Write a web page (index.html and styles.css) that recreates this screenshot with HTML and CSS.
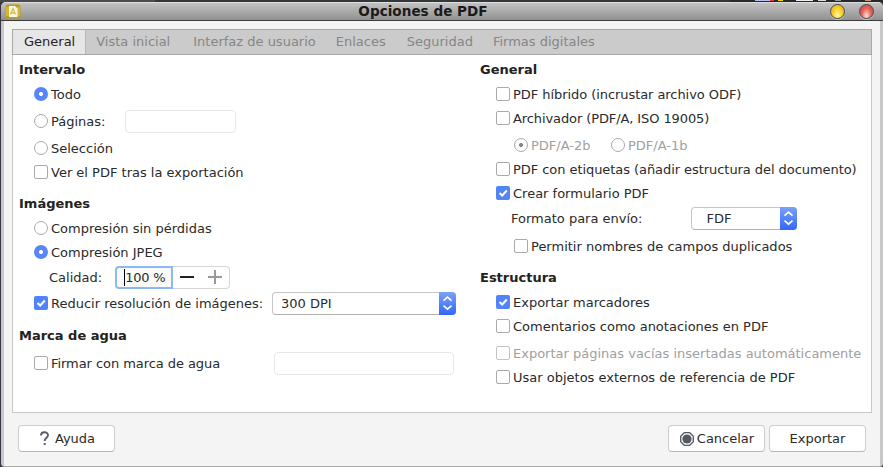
FILE: index.html
```html
<!DOCTYPE html>
<html lang="es">
<head>
<meta charset="utf-8">
<title>Opciones de PDF</title>
<link rel="stylesheet" href="styles.css">
</head>
<body>
<div class="desktop"><i class="d1"></i><i class="d2"></i><i class="d3"></i><i class="d4"></i><i class="d5"></i><i class="d6"></i><i class="d7"></i></div>
<div class="window">
  <header class="titlebar">
    <svg class="app-icon" width="16" height="16" viewBox="0 0 16 16"><rect x="0.5" y="0.5" width="15" height="14" rx="2.500" fill="#c39b13"/><path d="M1 3h3v9H1zM12 3h3v9h-3z" fill="#d8b52d"/><path d="M4 2h6l2.500 2.500V13H4z" fill="#fbf9ee"/><path d="M5.500 10.500L8 4.500l2.500 6M6.500 9h3" fill="none" stroke="#ddb945" stroke-width="1.300"/></svg>
    <h1>Opciones de PDF</h1>
    <span class="orb yellow"></span><span class="orb red"></span>
  </header>
  <main class="body">
    <nav class="tabs"><span class="tab active">General</span><span class="tab t2">Vista inicial</span><span class="tab t3">Interfaz de usuario</span><span class="tab t4">Enlaces</span><span class="tab t5">Seguridad</span><span class="tab t6">Firmas digitales</span></nav>
    <section class="panel">
      <div class="col left">
        <h2>Intervalo</h2>
        <label class="row"><i class="radio on"></i>Todo</label>
        <label class="row g3"><i class="radio"></i>Páginas:<span class="field pages"></span></label>
        <label class="row g3"><i class="radio"></i>Selección</label>
        <label class="row"><i class="check"></i>Ver el PDF tras la exportación</label>
        <h2 class="g8">Imágenes</h2>
        <label class="row"><i class="radio"></i>Compresión sin pérdidas</label>
        <label class="row"><i class="radio on"></i>Compresión JPEG</label>
        <div class="row g1 quality">Calidad:<span class="spin"><span class="value"><i class="caret"></i>100 %</span><span class="steps"><svg width="57" height="22" viewBox="0 0 57 22"><path d="M7 10h14" stroke="#222" stroke-width="2"/><path d="M35 10h14M42 3v14" stroke="#999" stroke-width="2"/></svg></span></span></div>
        <div class="row g2"><i class="check on"><svg width="14" height="14" viewBox="0 0 14 14"><path d="M3.500 7l2.700 2.500L10.800 4.500"/></svg></i>Reducir resolución de imágenes:<span class="select dpi">300 DPI<span class="arrows"><svg width="17" height="23" viewBox="0 0 17 23"><path d="M4.500 8.700l4-3.500 4 3.500M4.500 13.700l4 3.500 4-3.500"/></svg></span></span></div>
        <h2 class="g9">Marca de agua</h2>
        <label class="row g3 tight"><i class="check"></i>Firmar con marca de agua<span class="field mark"></span></label>
      </div>
      <div class="col right">
        <h2>General</h2>
        <label class="row tight"><i class="check"></i>PDF híbrido (incrustar archivo ODF)</label>
        <label class="row tighter"><i class="check"></i>Archivador (PDF/A, ISO 19005)</label>
        <div class="row g3 sub disabled"><i class="radio dot"></i><span class="pdfa">PDF/A-2b</span><i class="radio"></i>PDF/A-1b</div>
        <label class="row tight"><i class="check"></i>PDF con etiquetas (añadir estructura del documento)</label>
        <label class="row"><i class="check on"><svg width="14" height="14" viewBox="0 0 14 14"><path d="M3.500 7l2.700 2.500L10.800 4.500"/></svg></i>Crear formulario PDF</label>
        <div class="row g1 format">Formato para envío:<span class="select fdf">FDF<span class="arrows"><svg width="17" height="23" viewBox="0 0 17 23"><path d="M4.500 8.700l4-3.500 4 3.500M4.500 13.700l4 3.500 4-3.500"/></svg></span></span></div>
        <label class="row g4 sub"><i class="check"></i>Permitir nombres de campos duplicados</label>
        <h2 class="g8">Estructura</h2>
        <label class="row"><i class="check on"><svg width="14" height="14" viewBox="0 0 14 14"><path d="M3.500 7l2.700 2.500L10.800 4.500"/></svg></i>Exportar marcadores</label>
        <label class="row"><i class="check"></i>Comentarios como anotaciones en PDF</label>
        <label class="row g3 disabled"><i class="check"></i>Exportar páginas vacías insertadas automáticamente</label>
        <label class="row"><i class="check"></i>Usar objetos externos de referencia de PDF</label>
      </div>
    </section>
    <footer class="actions">
      <button class="help"><svg width="9" height="15" viewBox="0 0 9 15"><path d="M1 4.500C1 .3 8 .3 8 4.200 8 6.700 4.700 6.800 4.700 10" fill="none" stroke="#5b5d68" stroke-width="1.900"/><path d="M3.700 12h2v2h-2z" fill="#5b5d68"/></svg>Ayuda</button>
      <button class="cancel"><svg width="14" height="14" viewBox="0 0 14 14"><path d="M4.300.7h5.400l3.600 3.600v5.400l-3.600 3.600H4.300L.7 9.700V4.300z" fill="#fff" stroke="#555762" stroke-width="1.300"/><circle cx="7" cy="7" r="4.600" fill="#555762"/></svg>Cancelar</button>
      <button class="export">Exportar</button>
    </footer>
  </main>
</div>
</body>
</html>
```
FILE: styles.css
```css
* { box-sizing: border-box; }
body { margin: 0; width: 883px; height: 467px; overflow: hidden; background: #3a3540; font: 13px/24px "DejaVu Sans", sans-serif; color: #2a2a2a; white-space: nowrap; }
.desktop { height: 2px; background: linear-gradient(90deg, #4a4b50 0 155px, #34373a 155px 730px, #28282c 730px); display: flex; padding-left: 755px; }
.desktop i { height: 1px; }
.d1 { width: 15px; background: #b6c0f5; }
.d2 { width: 4px; background: #e03838; }
.d3 { width: 5px; margin-left: 4px; background: #f3e300; }
.d4 { width: 17px; margin-left: 13px; background: #eee; }
.d5 { width: 8px; margin-left: 5px; background: #ddd; }
.d6 { width: 6px; margin-left: 9px; background: #999; }
.d7 { width: 6px; margin-left: 24px; background: #c99c7c; }
.window { height: 465px; margin-left: 1px; background: #c9c7c7; border-radius: 5px 5px 4px 4px; overflow: hidden; }
.titlebar { height: 19px; display: flex; align-items: center; background: linear-gradient(#dedede 0 1px, #c2c2c2 1px, #919191); border-bottom: 1px solid #3c3c3c; padding: 0 9px 0 4px; }
.app-icon { margin-top: 2px; }
h1 { flex: 1; margin: 0 -1px 0 8px; font-size: 13.6px; line-height: 18px; text-align: center; color: #1b1b1b; }
.orb { width: 15px; height: 15px; border-radius: 50%; border: 1px solid #4d4d4d; margin: 1px 0 0 14px; box-shadow: 0 1px #ccc; }
.yellow { background: radial-gradient(ellipse at 50% 80%, #fff9a0, #f5cf2c 50%, #d9a51c); }
.red { background: radial-gradient(ellipse at 50% 85%, #ffe0da, #e2665c 50%, #c53c38); }
.body { height: 446px; margin: 0 3px; padding: 8px 8px 0; background: #f4f4f4; border-bottom: 1px solid #aaa; }
.tabs { display: flex; height: 26px; border: 1px solid #a9a9a9; background: #cbcbcb; color: #868686; }
.tab { padding: 0 11px; line-height: 24px; }
.tab.active { background: #e6e6e6; color: #252525; border-right: 1px solid #b7b7b7; padding-right: 10px; }
.t2 { padding: 0 12px 0 10px; }
.t4 { padding-left: 9px; }
.t5 { padding-left: 10px; }
.t6 { padding-left: 9px; }
.panel { height: 358px; display: grid; grid-template-columns: 461px 1fr; border: 1px solid #c9c9c9; border-top: 0; background: #fff; padding-top: 3px; }
.col { padding-left: 6px; }
h2 { margin: 0; font-size: 13px; line-height: 24px; height: 24px; color: #222; }
/* labels sit one pixel below the centre line of their controls */
.row { display: flex; align-items: center; height: 24px; padding: 2px 0 0 15px; }
.row > .radio, .row > .check, .row > .field, .row > .spin, .row > .select { margin-top: -2px; }
.tight { letter-spacing: -0.06px; }
.tighter { letter-spacing: -0.1px; }
.right .row { padding-left: 16px; }
.right .sub { padding-left: 34px; }
.g1 { margin-top: 1px; } .g2 { margin-top: 2px; } .g3 { margin-top: 3px; } .g4 { margin-top: 4px; }
.g8 { margin-top: 8px; } .g9 { margin-top: 9px; }
.radio, .check { flex: none; width: 14px; height: 14px; border: 1px solid #aaa; margin-right: 3px; background: #fff; }
.radio { border-radius: 50%; }
.check { border-radius: 2px; }
.radio.on { border: 0; background: radial-gradient(circle, #fff 0 1.700px, #5886f9 2.300px); }
.radio.dot { background: radial-gradient(circle, #888 0 1.700px, #fff 2.300px); }
.check.on { border: 0; background: #5284f9; }
.check svg, .arrows svg { display: block; fill: none; stroke: #fff; stroke-width: 2; }
.disabled { color: #a0a0a0; }
.disabled .check { border-color: #c4c4c4; }
.pdfa { width: 80px; }
.field { height: 23px; border: 1px solid #e8e8e8; border-radius: 4px; margin-left: auto; }
.left .row { width: 435px; }
.left .row.g2 { width: 437px; }
.pages { width: 111px; margin-right: 218px; }
.mark { width: 180px; }
.dpi { width: 184px; margin-left: auto; }
.left .quality { padding-left: 30px; }
.spin { display: flex; margin-left: 13px; height: 23px; }
.value { position: relative; width: 58px; border: 2px solid #8db9f2; border-radius: 4px 0 0 4px; background: #fafafa; line-height: 19px; padding-left: 8px; letter-spacing: -0.2px; }
.caret { position: absolute; left: 7px; top: 1px; width: 1px; height: 17px; background: #000; }
.steps { width: 57px; border: 1px solid #d6d6d6; border-left: 0; border-radius: 0 4px 4px 0; }
.steps svg { display: block; }
.select { display: flex; justify-content: space-between; height: 23px; line-height: 21px; border: 1px solid #c6c6c6; border-bottom-color: #b2b2b2; border-radius: 4px; padding-left: 8px; background: #fff; }
.arrows { width: 17px; height: 23px; margin: -1px -1px 0 0; border-radius: 0 4px 4px 0; background: linear-gradient(#7ba1f8, #3367fa); }
.arrows svg { stroke-width: 1.700; }
.fdf { width: 106px; padding-left: 14px; }
.right .format { padding-left: 31px; }
.format .fdf { margin-left: 49px; }
.actions { display: flex; padding: 12px 6px 0; }
button { display: flex; align-items: center; justify-content: center; width: 97px; height: 27px; border: 1px solid #cdcdcd; border-bottom-color: #b7b7b7; border-radius: 4px; background: #fff; font: inherit; color: #2a2a2a; padding: 0; }
.help svg { margin-right: 6px; }
.help { padding-left: 2px; }
.cancel { margin-left: auto; margin-right: 4px; padding-left: 1px; }
.cancel svg { margin-right: 3px; }
```
